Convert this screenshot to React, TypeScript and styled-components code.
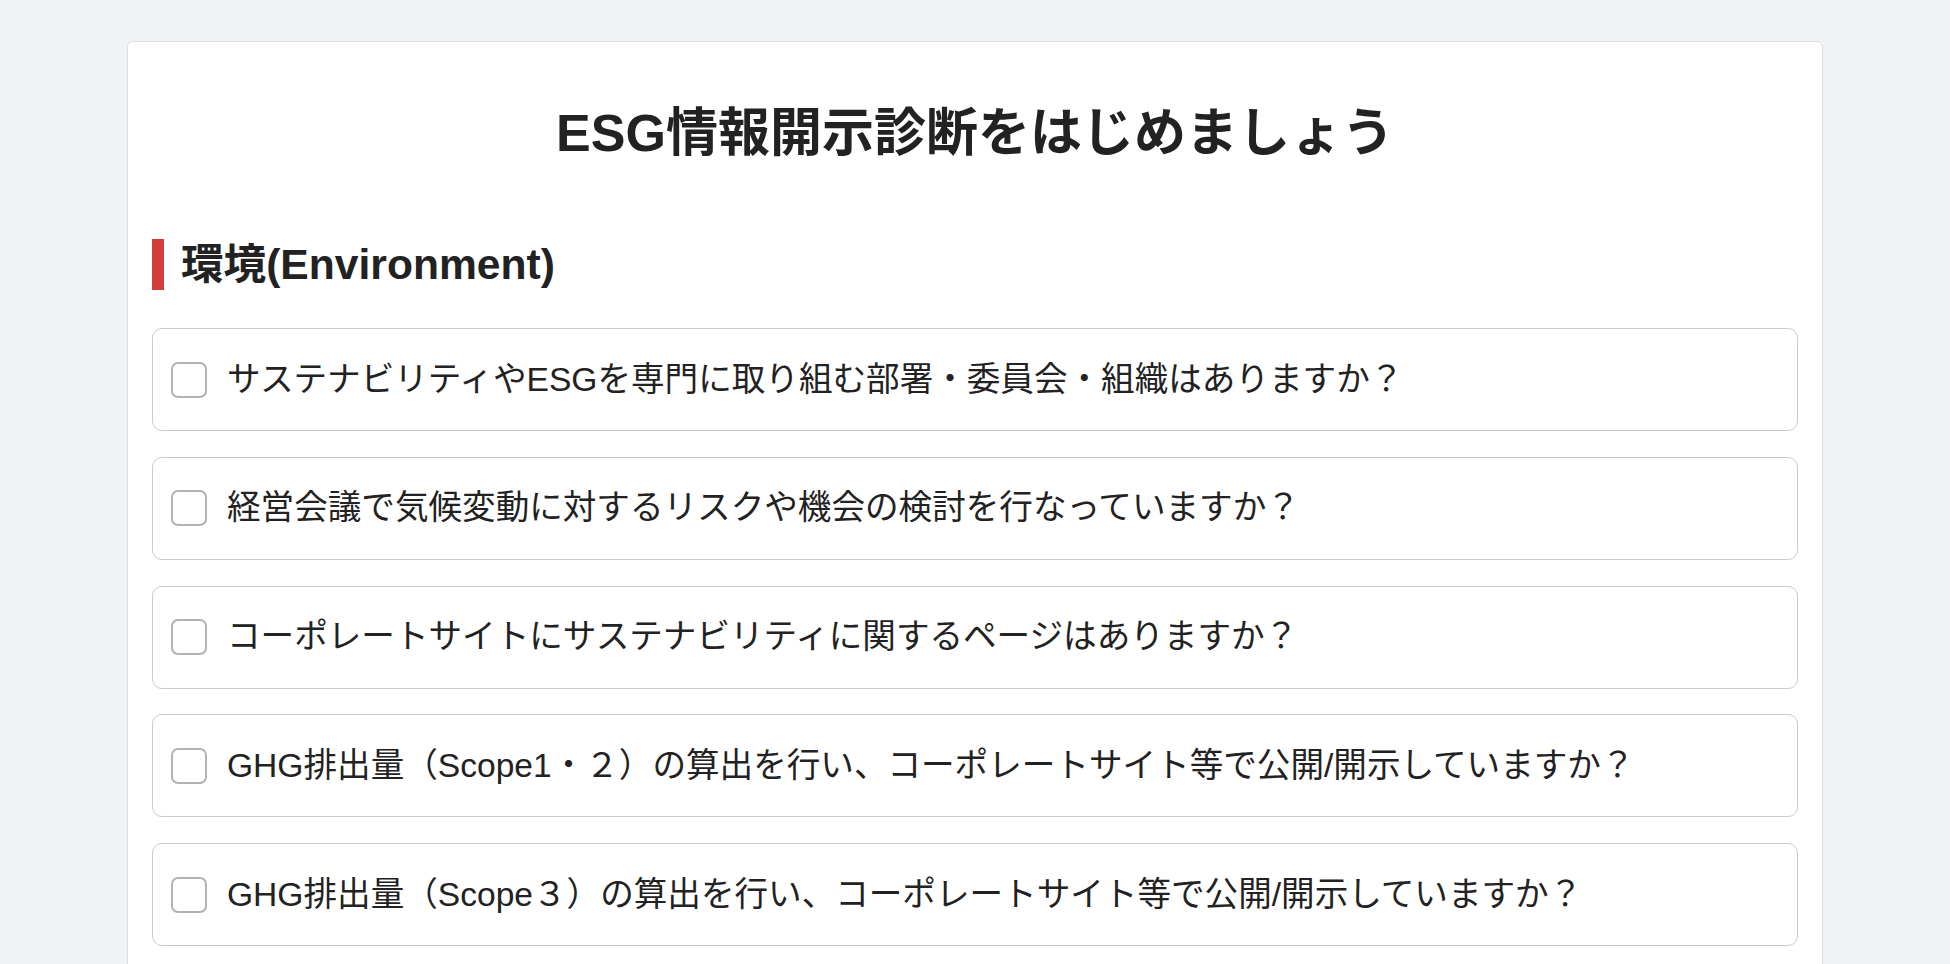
import React from "react";
import styled, { createGlobalStyle } from "styled-components";

const GlobalStyle = createGlobalStyle`
  html, body {
    margin: 0;
    padding: 0;
    background: #f1f2f6;
  }
  body {
    font-family: "Liberation Sans", "Noto Sans CJK JP", Arial, sans-serif;
    color: #222;
  }
`;

const Page = styled.div`
  padding-top: 41px;
  display: flex;
  justify-content: center;
`;

const Card = styled.main`
  width: 1696px;
  box-sizing: border-box;
  background: #ffffff;
  border: 1px solid #dcdde0;
  border-radius: 6px;
  padding: 60px 24px 60px;
`;

const Title = styled.h1`
  margin: 0;
  text-align: center;
  font-size: 52px;
  line-height: 62px;
  font-weight: 700;
  color: #222;
`;

const SectionTitle = styled.h2`
  margin: 75px 0 38px;
  border-left: 12px solid #d23c3c;
  padding-left: 17px;
  font-size: 42.6px;
  line-height: 51px;
  font-weight: 700;
  color: #222;
`;

const QuestionList = styled.ul`
  list-style: none;
  margin: 0;
  padding: 0;
  display: flex;
  flex-direction: column;
  gap: 25.8px;
`;

const QuestionItem = styled.li`
  height: 103px;
  box-sizing: border-box;
  border: 1px solid #c9cacc;
  border-radius: 10px;
  display: flex;
  align-items: center;
  padding: 0 18px;
  background: #fff;
`;

const Label = styled.label`
  display: flex;
  align-items: center;
  gap: 20px;
  cursor: pointer;
  font-size: 33.6px;
  line-height: 40px;
  color: #222;
`;

const Checkbox = styled.input.attrs({ type: "checkbox" })`
  appearance: none;
  -webkit-appearance: none;
  margin: 0;
  width: 36px;
  height: 36px;
  flex: 0 0 36px;
  box-sizing: border-box;
  border: 2px solid #b2b2b4;
  border-radius: 7px;
  background: #fff;
  cursor: pointer;
  &:checked {
    background: #d23c3c;
    border-color: #d23c3c;
  }
`;

const questions = [
  "サステナビリティやESGを専門に取り組む部署・委員会・組織はありますか？",
  "経営会議で気候変動に対するリスクや機会の検討を行なっていますか？",
  "コーポレートサイトにサステナビリティに関するページはありますか？",
  "GHG排出量（Scope1・２）の算出を行い、コーポレートサイト等で公開/開示していますか？",
  "GHG排出量（Scope３）の算出を行い、コーポレートサイト等で公開/開示していますか？",
];

export default function App() {
  return (
    <>
      <GlobalStyle />
      <Page>
        <Card>
          <Title>ESG情報開示診断をはじめましょう</Title>
          <SectionTitle>環境(Environment)</SectionTitle>
          <QuestionList>
            {questions.map((q, i) => (
              <QuestionItem key={i}>
                <Label>
                  <Checkbox />
                  <span>{q}</span>
                </Label>
              </QuestionItem>
            ))}
          </QuestionList>
        </Card>
      </Page>
    </>
  );
}
